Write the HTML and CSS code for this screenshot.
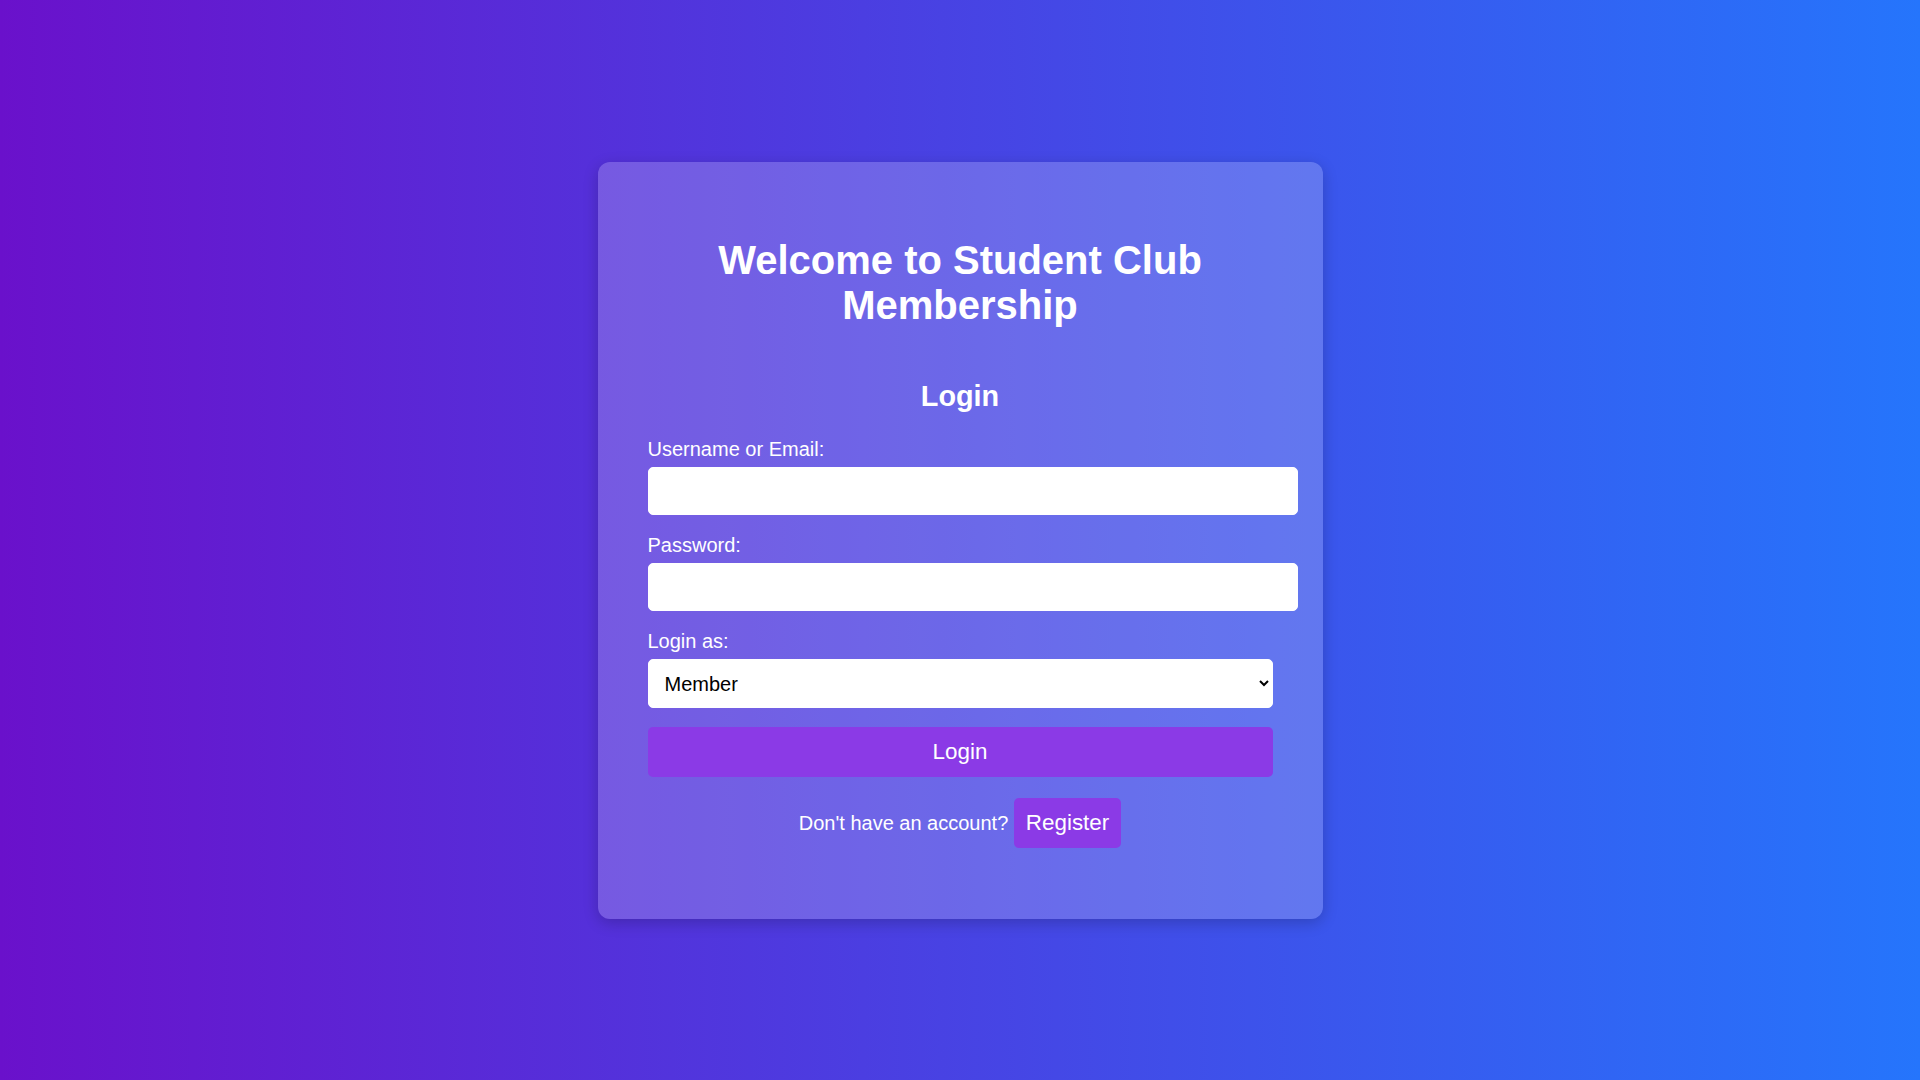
FILE: index.html
```html
<!DOCTYPE html>
<html lang="en">
<head>
<meta charset="UTF-8">
<title>Student Club Membership</title>
<link rel="stylesheet" href="styles.css">
</head>
<body>
<div class="card">
  <h1 class="title">Welcome to Student Club Membership</h1>
  <h2 class="subtitle">Login</h2>
  <form class="form">
    <label class="label" for="user">Username or Email:</label>
    <input class="field" type="text" id="user">
    <label class="label" for="pass">Password:</label>
    <input class="field" type="password" id="pass">
    <label class="label" for="role">Login as:</label>
    <select class="picker" id="role">
      <option>Member</option>
      <option>Admin</option>
    </select>
    <button class="btn btn-login" type="button">Login</button>
  </form>
  <p class="register">Don't have an account? <button class="btn btn-register" type="button">Register</button></p>
</div>
</body>
</html>
```
FILE: styles.css
```css
html, body {
  margin: 0;
  padding: 0;
}
body {
  height: 100vh;
  display: flex;
  align-items: center;
  justify-content: center;
  background: linear-gradient(to right, #6a11cb, #2575fc);
  font-family: "Liberation Sans", Arial, sans-serif;
  color: #fff;
}
.card {
  width: 625px;
  padding: 50px;
  background: rgba(255, 255, 255, 0.2);
  border-radius: 12px;
  box-shadow: 0 4px 15px rgba(0, 0, 0, 0.2);
  display: flex;
  flex-direction: column;
}
.title {
  margin: 26px 0 26px;
  font-size: 40px;
  line-height: 45px;
  font-weight: bold;
  text-align: center;
}
.subtitle {
  margin: 26px 0 25px;
  font-size: 28.8px;
  line-height: normal;
  font-weight: bold;
  text-align: center;
}
.form {
  display: flex;
  flex-direction: column;
  align-items: flex-start;
}
.label {
  display: block;
  font-size: 20px;
  line-height: 23px;
  margin-bottom: 6px;
}
.field {
  display: block;
  width: calc(100% + 25px);
  box-sizing: border-box;
  padding: 12px;
  border: 1px solid #fff;
  border-radius: 5px;
  font-family: "Liberation Sans", Arial, sans-serif;
  font-size: 20px;
  line-height: 22px;
  height: 48px;
  margin: 0 0 19px;
  background: #fff;
  color: #000;
  outline: none;
}
.picker {
  display: block;
  width: 100%;
  box-sizing: border-box;
  padding: 12px;
  border: 1px solid #fff;
  border-radius: 5px;
  font-family: "Liberation Sans", Arial, sans-serif;
  font-size: 20px;
  height: 49px;
  margin: 0 0 19px;
  background: #fff;
  color: #000;
}
.btn {
  font-family: "Liberation Sans", Arial, sans-serif;
  font-size: 22.4px;
  line-height: normal;
  color: #fff;
  background: #8b3ae6;
  border: none;
  border-radius: 5px;
  padding: 12px;
  cursor: pointer;
}
.btn-login {
  width: 100%;
  height: 50px;
  padding: 0 12px;
}
.btn-register {
  display: inline-block;
  height: 50px;
  padding: 0 12px;
  vertical-align: baseline;
}
.register {
  margin: 21px 0 21px;
  font-size: 20px;
  text-align: center;
}
```
